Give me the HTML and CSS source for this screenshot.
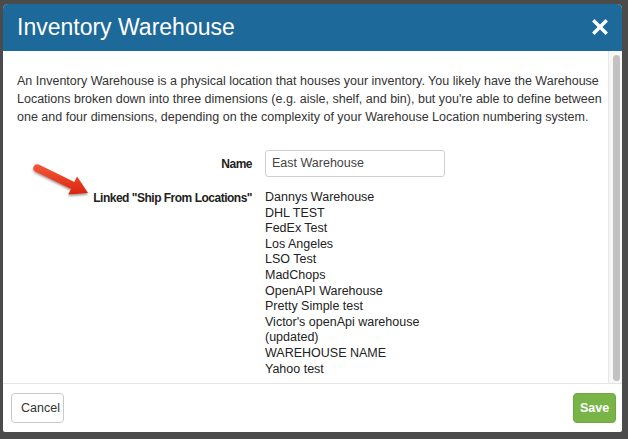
FILE: index.html
```html
<!DOCTYPE html>
<html>
<head>
<meta charset="utf-8">
<link rel="stylesheet" href="styles.css">
</head>
<body>
<div class="modal">
  <div class="modal-header">
    <h1 class="modal-title">Inventory Warehouse</h1>
    <svg class="close" width="16" height="16" viewBox="0 0 16 16"><path d="M2.5 2.5 L13.5 13.5 M13.5 2.5 L2.5 13.5" stroke="#fff" stroke-width="3.4" stroke-linecap="square"/></svg>
  </div>
  <div class="modal-body">
    <div class="body-content">
      <p class="intro">An Inventory Warehouse is a physical location that houses your inventory. You likely have the Warehouse Locations broken down into three dimensions (e.g. aisle, shelf, and bin), but you're able to define between one and four dimensions, depending on the complexity of your Warehouse Location numbering system.</p>
      <div class="form">
        <div class="label name-label">Name</div>
        <div class="input">East Warehouse</div>
        <div class="label linked-label">Linked "Ship From Locations"</div>
        <ul class="locations">
          <li>Dannys Warehouse</li>
          <li>DHL TEST</li>
          <li>FedEx Test</li>
          <li>Los Angeles</li>
          <li>LSO Test</li>
          <li>MadChops</li>
          <li>OpenAPI Warehouse</li>
          <li>Pretty Simple test</li>
          <li>Victor's openApi warehouse (updated)</li>
          <li>WAREHOUSE NAME</li>
          <li>Yahoo test</li>
        </ul>
      </div>
      <svg class="arrow" width="70" height="44" viewBox="0 0 70 44">
        <defs>
          <linearGradient id="rg" x1="0" y1="0" x2="0" y2="1">
            <stop offset="0" stop-color="#f4583a"/>
            <stop offset="1" stop-color="#d8250f"/>
          </linearGradient>
          <filter id="sh" x="-20%" y="-20%" width="140%" height="160%">
            <feDropShadow dx="0" dy="1.5" stdDeviation="1.3" flood-color="#000" flood-opacity="0.45"/>
          </filter>
        </defs>
        <path filter="url(#sh)" fill="url(#rg)" d="M8.67 4.59 L44.37 22.09 L47.1 16.52 L58 33 L38.3 34.48 L41.03 28.91 L5.33 11.41 A3.8 3.8 0 0 1 8.67 4.59 Z"/>
      </svg>
    </div>
    <div class="scrollbar"><div class="thumb"></div></div>
  </div>
  <div class="modal-footer">
    <button class="btn btn-cancel">Cancel</button>
    <button class="btn btn-save">Save</button>
  </div>
</div>
</body>
</html>
```

FILE: styles.css
```css
html, body {
  margin: 0;
  padding: 0;
  background: #4b4b4b;
  width: 628px;
  height: 439px;
  overflow: hidden;
}
body {
  padding: 4px 6px 7px 3px;
  box-sizing: border-box;
  font-family: "Liberation Sans", Arial, sans-serif;
  color: #333;
}
.modal {
  width: 619px;
  height: 428px;
  background: #fff;
  border-radius: 5px 5px 2px 2px;
  display: flex;
  flex-direction: column;
  overflow: hidden;
}
.modal-header {
  height: 47px;
  flex: none;
  background: #1d699a;
  display: flex;
  align-items: center;
  justify-content: space-between;
  padding: 0 14px 0 14px;
}
.modal-title {
  margin: 0;
  color: #fff;
  font-weight: normal;
  font-size: 23px;
}
.close {
  display: block;
  margin-top: -1px;
}
.modal-body {
  flex: 1;
  display: flex;
  min-height: 0;
}
.body-content {
  flex: 1;
  position: relative;
  overflow: hidden;
  padding: 21px 0 0 14px;
}
.scrollbar {
  width: 14px;
  flex: none;
  box-sizing: border-box;
  background: #f7f7f7;
  border-left: 1px solid #e8e8e8;
  padding: 4px 2px 2px 4px;
}
.thumb {
  height: 100%;
  background: #c2c2c2;
  border-radius: 4px;
}
.intro {
  margin: 0 0 24px 0;
  font-size: 12.5px;
  line-height: 18px;
  width: 592px;
}
.form {
  display: grid;
  grid-template-columns: 235px 180px;
  column-gap: 13px;
  row-gap: 13px;
  font-size: 12.5px;
}
.label {
  text-align: right;
  font-weight: bold;
  font-size: 12px;
  letter-spacing: -0.5px;
  color: #222;
}
.name-label {
  align-self: center;
}
.linked-label {
  line-height: 16px;
}
.input {
  height: 27px;
  box-sizing: border-box;
  border: 1px solid #cfcfcf;
  border-radius: 3px;
  padding: 5px 6px;
  line-height: 15px;
  color: #444;
}
.locations {
  list-style: none;
  margin: 0;
  padding: 0;
  line-height: 15.6px;
  color: #222;
}
.arrow {
  position: absolute;
  left: 27px;
  top: 109px;
}
.modal-footer {
  height: 49px;
  flex: none;
  box-sizing: border-box;
  border-top: 1px solid #e5e5e5;
  display: flex;
  justify-content: space-between;
  align-items: flex-start;
  padding: 9px 6px 0 8px;
}
.btn {
  font-family: "Liberation Sans", Arial, sans-serif;
  font-size: 12.5px;
  height: 30px;
  border-radius: 4px;
  padding: 0 9px;
}
.btn-cancel {
  background: #fff;
  border: 1px solid #c8c8c8;
  color: #333;
  width: 53px;
}
.btn-save {
  background: #78b448;
  border: 1px solid #6ea63f;
  color: #fff;
  font-weight: bold;
  width: 43px;
  padding: 0;
}
```
